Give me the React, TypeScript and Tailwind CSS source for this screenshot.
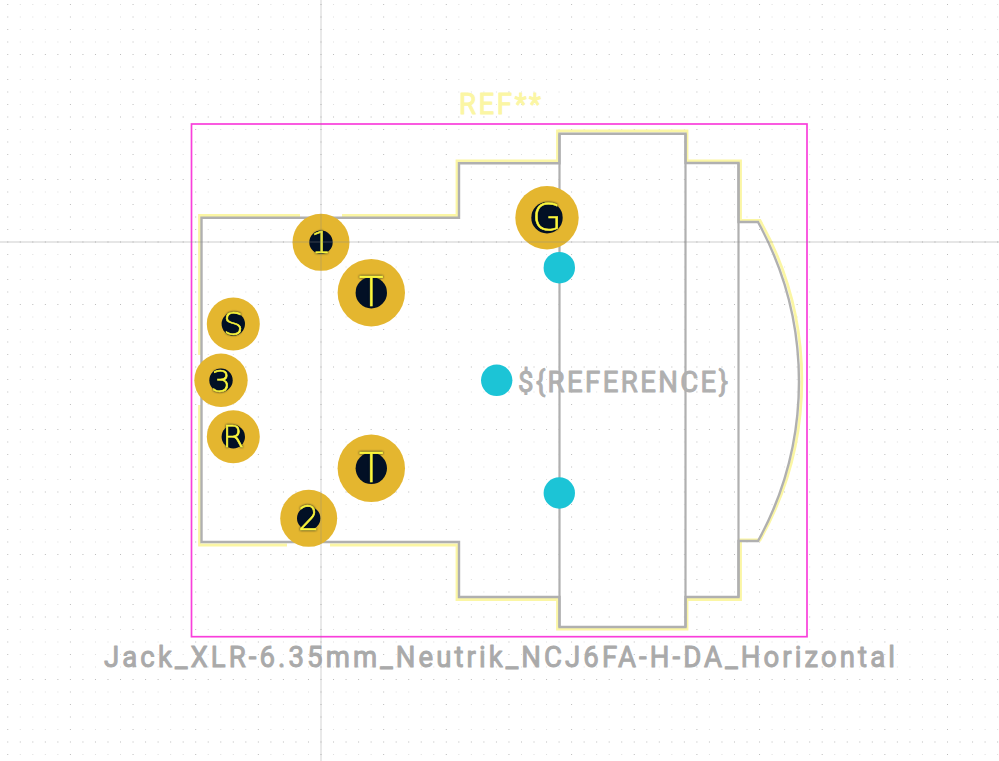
import React from 'react'

const PITCH_X = 12.53
const PITCH_Y = 12.5
const ORIGIN_X = 321
const ORIGIN_Y = 242

const pads = [
  { label: 'G', x: 547, y: 217.7, r: 31.7, hole: 15.7, size: 38, dy: 12.3 },
  { label: '1', x: 321, y: 242.3, r: 28.5, hole: 11.7, size: 31, dy: 11 },
  { label: 'T', x: 371.3, y: 292.7, r: 33.7, hole: 15.7, size: 40, dy: 13.3 },
  { label: 'S', x: 233.3, y: 324, r: 26.5, hole: 11.7, size: 32, dy: 11 },
  { label: '3', x: 221, y: 380.3, r: 26.7, hole: 11.7, size: 31, dy: 11.4 },
  { label: 'R', x: 233.3, y: 436.7, r: 26.5, hole: 11.7, size: 31, dy: 10.6 },
  { label: 'T', x: 371.3, y: 468.3, r: 33.7, hole: 15.7, size: 40, dy: 13.3 },
  { label: '2', x: 308.7, y: 518.3, r: 28.5, hole: 11.7, size: 33, dy: 11.7 },
]

const npth = [
  { x: 559.3, y: 267.7 },
  { x: 496.7, y: 380.3 },
  { x: 559.3, y: 493 },
]

const dots: { x: number; y: number; major: boolean }[] = []
for (let i = -25; i <= 54; i++) {
  for (let j = -19; j <= 41; j++) {
    dots.push({ x: ORIGIN_X + i * PITCH_X, y: ORIGIN_Y + j * PITCH_Y, major: i % 5 === 0 || j % 5 === 0 })
  }
}

const fabOutline =
  'M321 217.7 H459 V163.3 H559.5 V133.7 H685.5 V163 H738.5 V222 H758 A331 331 0 0 1 758 541 H738.5 V597 H685.5 V627 H559.5 V597 H459 V542 H201.5 V217.7 H321'

const silkOutline = [
  'M342 215.5 H457 V161 H557.5 V131 H687 V161 H740.5 V220.5 H760 A326 326 0 0 1 760 540 H740.5 V599.5 H687 V629 H557.5 V599.5 H457 V545 H330',
  'M287 545 H199.5 V405',
  'M199.5 355 V215.5 H300',
]

const labelFont = { fontFamily: 'Roboto, sans-serif', fontSize: 30 }

// the board's stroke font is narrower than Roboto, so squeeze the glyphs and let spacing fill the rest
const SQUEEZE = 0.92

export default function App() {
  return (
    <div className="w-[999px] h-[761px] bg-white overflow-hidden">
      <svg width="999" height="761" viewBox="0 0 999 761" className="block">
        {dots.map((d) => (
          <rect
            key={`${d.x}-${d.y}`}
            x={d.x - 0.5}
            y={d.y - 0.5}
            width="1"
            height="1"
            className={d.major ? 'fill-[#bcbcbc]' : 'fill-[#dedede]'}
          />
        ))}

        <rect x="191.5" y="124" width="615.5" height="512.7" fill="none" className="stroke-[#f93fdb]" strokeWidth="1.7" />

        <path d={silkOutline.join(' ')} fill="none" className="stroke-[#fbf6a4]" strokeWidth="2.8" />
        <path d={fabOutline} fill="none" className="stroke-[#b0b0b0]" strokeWidth="2.4" />
        <path d="M559.5 133.7 V627 M685.5 133.7 V627 M738.5 163 V597" fill="none" className="stroke-[#b0b0b0]" strokeWidth="2.2" />

        <text
          transform={`translate(459 114) scale(${SQUEEZE} 1)`}
          textLength={82 / SQUEEZE}
          lengthAdjust="spacing"
          className="fill-[#fbf6a4] stroke-[#fbf6a4]"
          strokeWidth="1"
          strokeLinejoin="round"
          style={labelFont}
        >
          REF**
        </text>
        <text
          transform={`translate(518 392) scale(${SQUEEZE} 1)`}
          textLength={210 / SQUEEZE}
          lengthAdjust="spacing"
          className="fill-[#b0b0b0] stroke-[#b0b0b0]"
          strokeWidth="1"
          strokeLinejoin="round"
          style={labelFont}
        >
          {'${REFERENCE}'}
        </text>
        <text
          transform={`translate(104 667) scale(${SQUEEZE} 1)`}
          textLength={791 / SQUEEZE}
          lengthAdjust="spacing"
          className="fill-[#aaaaaa] stroke-[#aaaaaa]"
          strokeWidth="1"
          strokeLinejoin="round"
          style={labelFont}
        >
          Jack_XLR-6.35mm_Neutrik_NCJ6FA-H-DA_Horizontal
        </text>

        {npth.map((p) => (
          <circle key={p.y} cx={p.x} cy={p.y} r="15.7" className="fill-[#1cc4d6]" />
        ))}

        {pads.map((p) => (
          <g key={`${p.label}-${p.y}`}>
            <circle cx={p.x} cy={p.y} r={p.r} className="fill-[#e4b62f]" />
            <circle cx={p.x} cy={p.y} r={p.hole} className="fill-[#021025]" />
            <text
              x={p.x}
              y={p.y + p.dy}
              textAnchor="middle"
              className="fill-[#fbf63c] stroke-[#fbf63c] drop-shadow-[0_0_1px_#021025]"
              strokeWidth="0.6"
              style={{ fontFamily: '"DejaVu Sans", sans-serif', fontWeight: 200, fontSize: p.size }}
            >
              {p.label}
            </text>
          </g>
        ))}

        <path d={`M${ORIGIN_X} 0 V761 M0 ${ORIGIN_Y} H999`} fill="none" className="stroke-[#8a8a8a]" strokeOpacity="0.28" strokeWidth="1.3" />
      </svg>
    </div>
  )
}
